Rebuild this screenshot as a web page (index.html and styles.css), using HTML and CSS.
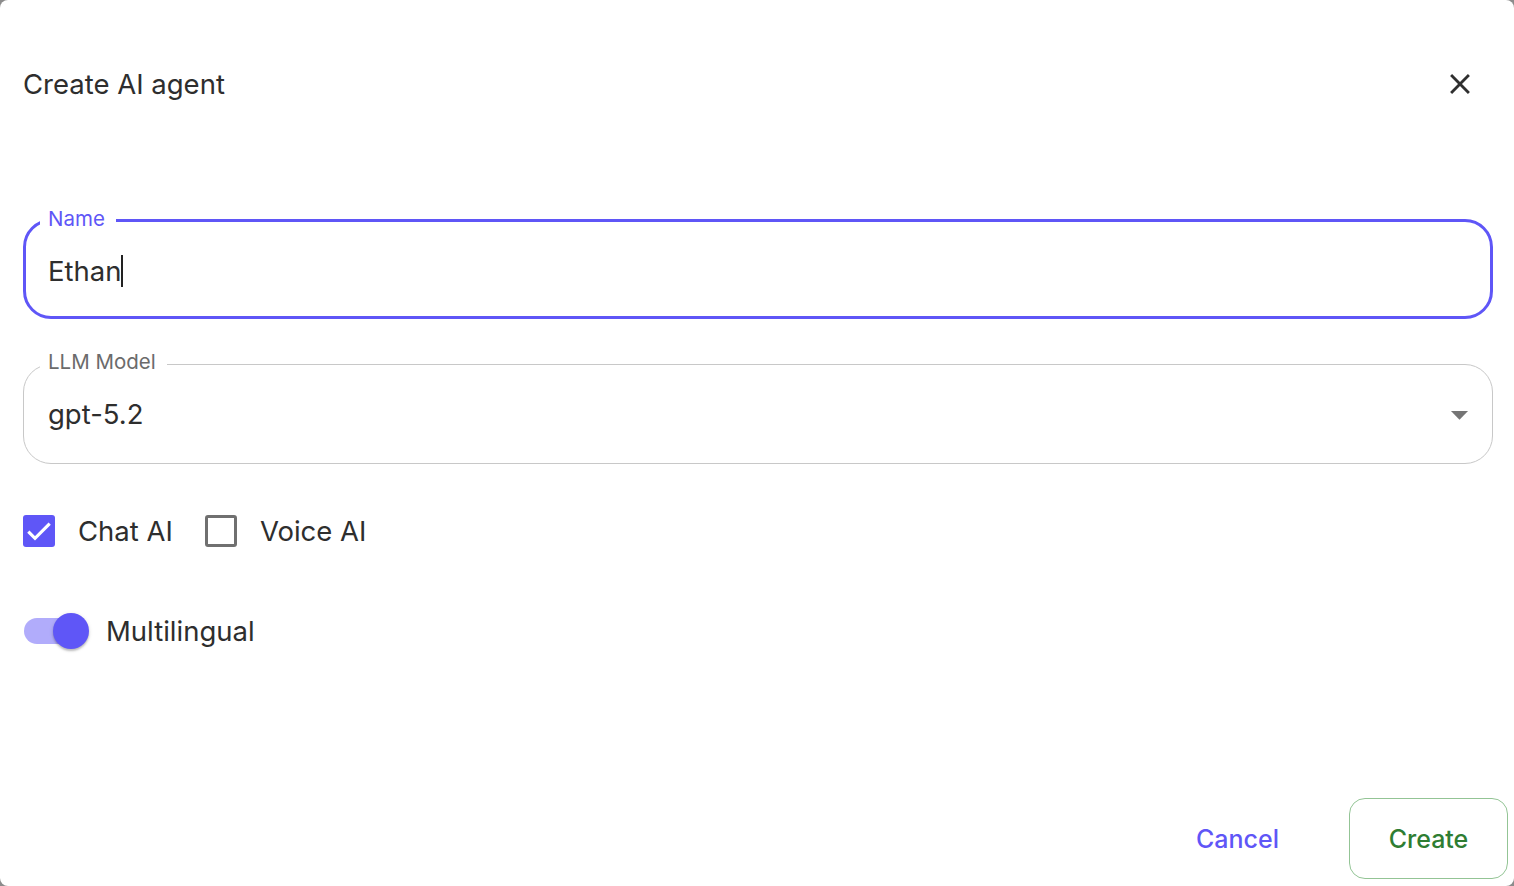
FILE: index.html
```html
<!DOCTYPE html>
<html lang="en">
<head>
    <meta charset="UTF-8">
    <meta name="viewport" content="width=device-width, initial-scale=1.0">
    <title>Create AI agent</title>
    <link rel="stylesheet" href="styles.css">
</head>
<body>
    <div class="dialog">
        <div class="dialog-header">
            <h2 class="dialog-title">Create AI agent</h2>
            <button class="close-button" aria-label="Close">
                <svg width="34" height="34" viewBox="0 0 24 24"><path fill="#2f2f2f" d="M19 6.41 17.59 5 12 10.59 6.41 5 5 6.41 10.59 12 5 17.59 6.41 19 12 13.41 17.59 19 19 17.59 13.41 12z"/></svg>
            </button>
        </div>

        <div class="dialog-content">
            <div class="field field-focused">
                <span class="field-label">Name</span>
                <div class="field-value">Ethan<span class="caret"></span></div>
            </div>

            <div class="field field-select">
                <span class="field-label">LLM Model</span>
                <div class="field-value">gpt-5.2</div>
                <svg class="select-arrow" width="41" height="41" viewBox="0 0 24 24"><path fill="#757575" d="M7 10l5 5 5-5z"/></svg>
            </div>

            <div class="check-row">
                <label class="check">
                    <span class="check-box checked">
                        <svg width="32" height="32" viewBox="0 0 24 24"><path fill="none" stroke="#fff" stroke-width="2.4" d="M4 12.5l5 5L20 6.5"/></svg>
                    </span>
                    Chat AI
                </label>
                <label class="check">
                    <span class="check-box"></span>
                    Voice AI
                </label>
            </div>

            <label class="switch-row">
                <span class="switch">
                    <span class="switch-track"></span>
                    <span class="switch-thumb"></span>
                </span>
                Multilingual
            </label>
        </div>

        <div class="dialog-actions">
            <button class="btn btn-text">Cancel</button>
            <button class="btn btn-outlined">Create</button>
        </div>
    </div>
</body>
</html>
```

FILE: styles.css
```css
body {
    margin: 0;
    background-color: #8c8c8c;
    font-family: Inter, "Noto Sans", sans-serif;
    color: #2e2e2e;
}

.dialog {
    width: 100vw;
    height: 100vh;
    box-sizing: border-box;
    background-color: #fff;
    border-radius: 8px;
    display: flex;
    flex-direction: column;
    overflow: hidden;
}

.dialog-header {
    display: flex;
    align-items: center;
    justify-content: space-between;
    height: 40px;
    margin-top: 64px;
    padding: 0 37px 0 23px;
}

.dialog-title {
    margin: 0;
    font-size: 27.5px;
    font-weight: 400;
    line-height: 40px;
}

.close-button {
    background: none;
    border: none;
    padding: 0;
    display: flex;
    cursor: pointer;
}

.dialog-content {
    padding: 0 21px 0 23px;
    margin-top: 115px;
}

.field {
    position: relative;
    height: 100px;
    box-sizing: border-box;
    border: 1px solid #c8c8c8;
    border-radius: 28px;
    display: flex;
    align-items: center;
    padding: 0 12px 0 24px;
    margin-bottom: 45px;
}

.field-focused {
    border: 3px solid #5f56f7;
    padding: 3px 12px 0 22px;
}

.field-label {
    position: absolute;
    top: -15px;
    left: 16px;
    padding: 0 11px 0 8px;
    background-color: #fff;
    font-size: 20.5px;
    line-height: 24px;
    color: #6b6b6b;
}

.field-focused .field-label {
    left: 14px;
    top: -15px;
    color: #5f56f7;
}

.field-value {
    font-size: 27.5px;
    line-height: 34px;
    display: flex;
    align-items: center;
}

.caret {
    display: inline-block;
    width: 2px;
    height: 32px;
    background-color: #222;
}

.select-arrow {
    margin-left: auto;
}

.check-row {
    display: flex;
    align-items: center;
    gap: 32px;
    margin-top: 50px;
}

.check {
    display: flex;
    align-items: center;
    gap: 23px;
    font-size: 27.5px;
    cursor: pointer;
}

.check-box {
    width: 32px;
    height: 32px;
    box-sizing: border-box;
    border: 3px solid #707070;
    border-radius: 3px;
    display: flex;
    align-items: center;
    justify-content: center;
}

.check-box.checked {
    border: none;
    background-color: #5f56f7;
}

.switch-row {
    display: flex;
    align-items: center;
    gap: 17px;
    margin-top: 65px;
    font-size: 27.5px;
    cursor: pointer;
}

.switch {
    position: relative;
    width: 66px;
    height: 36px;
    display: flex;
    align-items: center;
}

.switch-track {
    width: 62px;
    height: 26px;
    margin-left: 1px;
    border-radius: 13px;
    background-color: #b1acfb;
}

.switch-thumb {
    position: absolute;
    top: 0;
    right: 0;
    width: 36px;
    height: 36px;
    border-radius: 50%;
    background-color: #5f56f7;
    box-shadow: 0 2px 2px rgba(0, 0, 0, 0.2), 0 1px 4px rgba(0, 0, 0, 0.12);
}

.dialog-actions {
    margin-top: auto;
    display: flex;
    justify-content: flex-end;
    align-items: center;
    gap: 50px;
    padding: 0 6px 7px 0;
}

.btn {
    height: 81px;
    font-family: Inter, "Noto Sans", sans-serif;
    font-size: 25px;
    font-weight: 500;
    background: none;
    border: none;
    cursor: pointer;
}

.btn-text {
    padding: 0 20px;
    color: #5f56f7;
}

.btn-outlined {
    width: 159px;
    padding: 0;
    border: 1px solid #93c495;
    border-radius: 16px;
    color: #2e7d32;
}
```
